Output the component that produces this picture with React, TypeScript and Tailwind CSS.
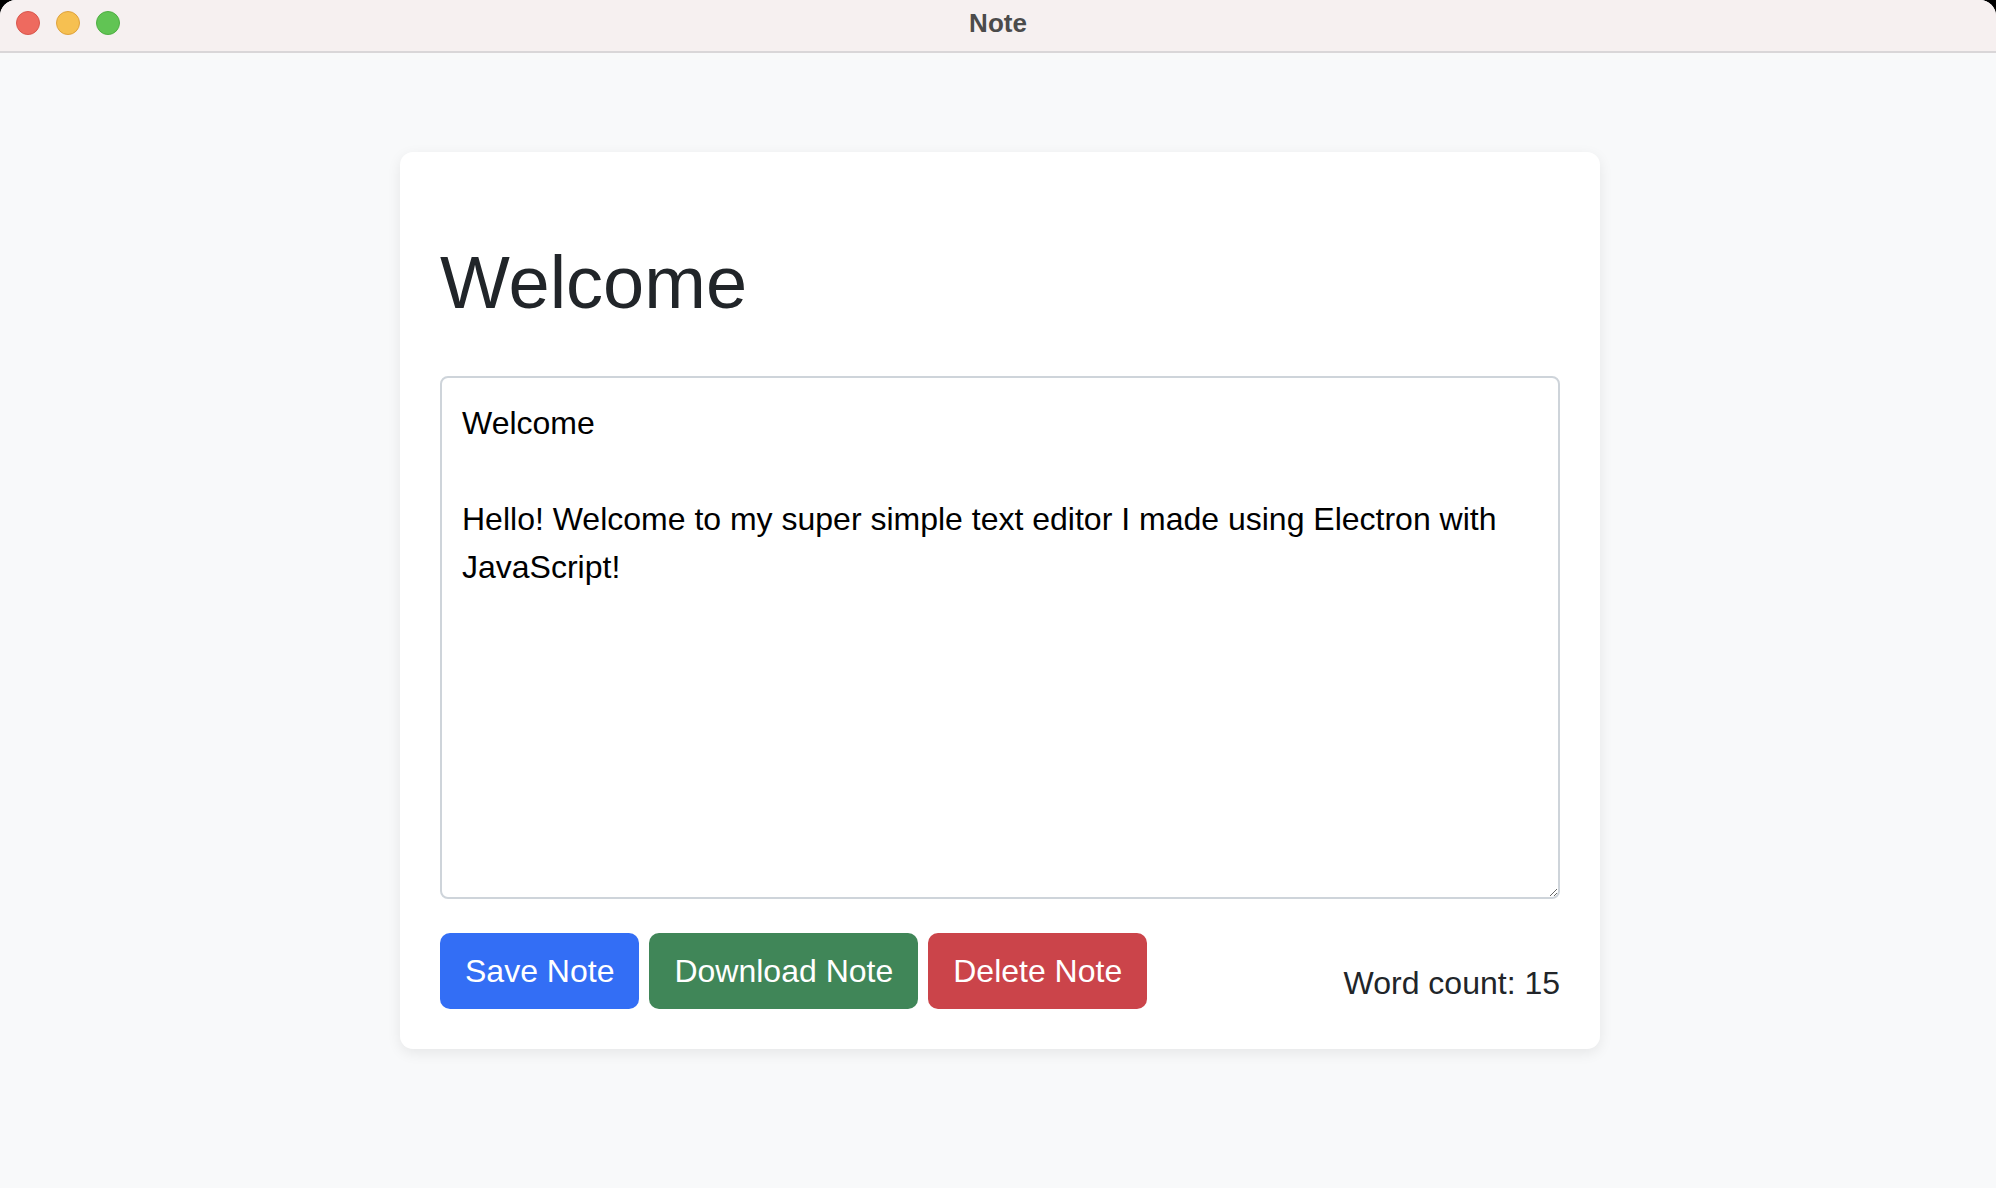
import { useState } from 'react';

const initialText = `Welcome

Hello! Welcome to my super simple text editor I made using Electron with JavaScript!`;

const countWords = (text: string): number => {
  const words = text.trim().split(/\s+/).filter(Boolean);
  return words.length;
};

const TitleBar = () => {
  return (
    <div className="relative h-[53px] bg-[#f6f0f0] border-b-2 border-[#d9d6d8] flex items-center justify-center">
      <div className="absolute left-[16px] top-[11px] flex gap-[16px]">
        <span className="w-[24px] h-[24px] rounded-full bg-[#ee6a5f] border border-[#d8574d]" />
        <span className="w-[24px] h-[24px] rounded-full bg-[#f6c051] border border-[#dea23d]" />
        <span className="w-[24px] h-[24px] rounded-full bg-[#61c454] border border-[#4fae43]" />
      </div>
      <span className="text-[26px] font-bold text-[#4b4b4b] leading-none -mt-[5px]">Note</span>
    </div>
  );
};

export default function App() {
  const [text, setText] = useState(initialText);

  return (
    <div
      className="w-[1996px] h-[1188px] bg-black overflow-hidden"
      style={{ fontFamily: '"Liberation Sans", Arial, sans-serif' }}
    >
      <div className="w-full h-full rounded-t-[16px] overflow-hidden bg-[#f8f9fa] flex flex-col">
        <TitleBar />
        <div className="flex-1 pt-[99px] pl-[4px]">
          <div className="mx-auto w-[1200px] bg-white rounded-[13px] shadow-[0_4px_14px_rgba(0,0,0,0.08)] px-[40px] pt-[87px] pb-[40px]">
            <h1 className="text-[74px] leading-[88px] text-[#212529] mb-[49px]">Welcome</h1>
            <textarea
              value={text}
              onChange={(e) => setText(e.target.value)}
              className="block w-full h-[523px] border-2 border-[#ced4da] rounded-[8px] px-[20px] pt-[21px] pb-[12px] text-[32px] leading-[48px] text-black outline-none resize-y"
              style={{ fontFamily: '"Liberation Sans", Arial, sans-serif' }}
            />
            <div className="mt-[34px] flex items-end justify-between">
              <div className="flex gap-[10px]">
                <button className="h-[76px] px-[25px] rounded-[10px] bg-[#336ef5] text-white text-[32px] leading-[48px]">
                  Save Note
                </button>
                <button className="h-[76px] px-[25px] rounded-[10px] bg-[#408658] text-white text-[32px] leading-[48px]">
                  Download Note
                </button>
                <button className="h-[76px] px-[25px] rounded-[10px] bg-[#cb444a] text-white text-[32px] leading-[48px]">
                  Delete Note
                </button>
              </div>
              <span className="text-[32px] leading-[48px] text-[#212529] mb-[2px]">
                Word count: {countWords(text)}
              </span>
            </div>
          </div>
        </div>
      </div>
    </div>
  );
}
